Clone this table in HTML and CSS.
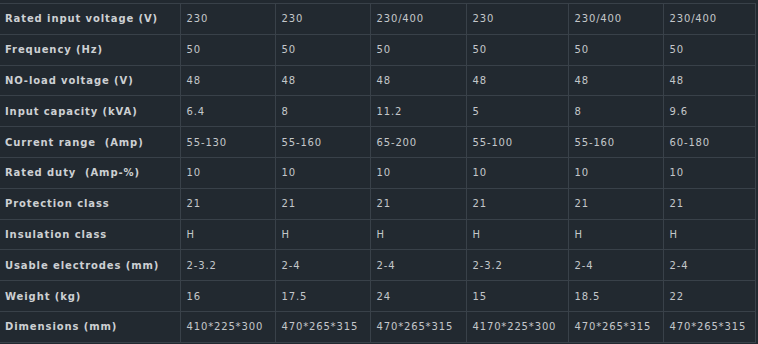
FILE: index.html
```html
<!DOCTYPE html>
<html>
<head>
<meta charset="utf-8">
<link rel="stylesheet" href="styles.css">
</head>
<body>
<table class="spec">
<colgroup>
<col class="c-label"><col class="c1"><col class="c2"><col class="c3"><col class="c4"><col class="c5"><col class="c6">
</colgroup>
<tbody>
<tr><th>Rated input voltage (V)</th><td>230</td><td>230</td><td>230/400</td><td>230</td><td>230/400</td><td>230/400</td></tr>
<tr><th>Frequency (Hz)</th><td>50</td><td>50</td><td>50</td><td>50</td><td>50</td><td>50</td></tr>
<tr><th>NO-load voltage (V)</th><td>48</td><td>48</td><td>48</td><td>48</td><td>48</td><td>48</td></tr>
<tr><th>Input capacity (kVA)</th><td>6.4</td><td>8</td><td>11.2</td><td>5</td><td>8</td><td>9.6</td></tr>
<tr><th>Current range &nbsp;(Amp)</th><td>55-130</td><td>55-160</td><td>65-200</td><td>55-100</td><td>55-160</td><td>60-180</td></tr>
<tr><th>Rated duty &nbsp;(Amp-%)</th><td>10</td><td>10</td><td>10</td><td>10</td><td>10</td><td>10</td></tr>
<tr><th>Protection class</th><td>21</td><td>21</td><td>21</td><td>21</td><td>21</td><td>21</td></tr>
<tr><th>Insulation class</th><td>H</td><td>H</td><td>H</td><td>H</td><td>H</td><td>H</td></tr>
<tr><th>Usable electrodes (mm)</th><td>2-3.2</td><td>2-4</td><td>2-4</td><td>2-3.2</td><td>2-4</td><td>2-4</td></tr>
<tr><th>Weight (kg)</th><td>16</td><td>17.5</td><td>24</td><td>15</td><td>18.5</td><td>22</td></tr>
<tr><th>Dimensions (mm)</th><td>410*225*300</td><td>470*265*315</td><td>470*265*315</td><td>4170*225*300</td><td>470*265*315</td><td>470*265*315</td></tr>
</tbody>
</table>
</body>
</html>
```
FILE: styles.css
```css
html, body {
  margin: 0;
  padding: 0;
  background: #222930;
}
body {
  padding-top: 3px;
}
.spec {
  border-collapse: collapse;
  table-layout: fixed;
  width: 755px;
  font-family: "DejaVu Sans", Verdana, sans-serif;
  font-size: 10px;
}
.c-label { width: 180px; }
.c1 { width: 95px; }
.c2 { width: 95px; }
.c3 { width: 96px; }
.c4 { width: 102px; }
.c5 { width: 95px; }
.c6 { width: 92px; }
.spec th, .spec td {
  border: 1px solid #394149;
  height: 29.8px;
  padding: 0 0 0 6px;
  text-align: left;
  vertical-align: middle;
  white-space: nowrap;
  overflow: hidden;
}
.spec th {
  padding-left: 5px;
  font-weight: bold;
  color: #cdd0d3;
  letter-spacing: 0.9px;
  border-left: none;
}
.spec td {
  color: #c4c7ca;
  letter-spacing: 0.85px;
}
```
